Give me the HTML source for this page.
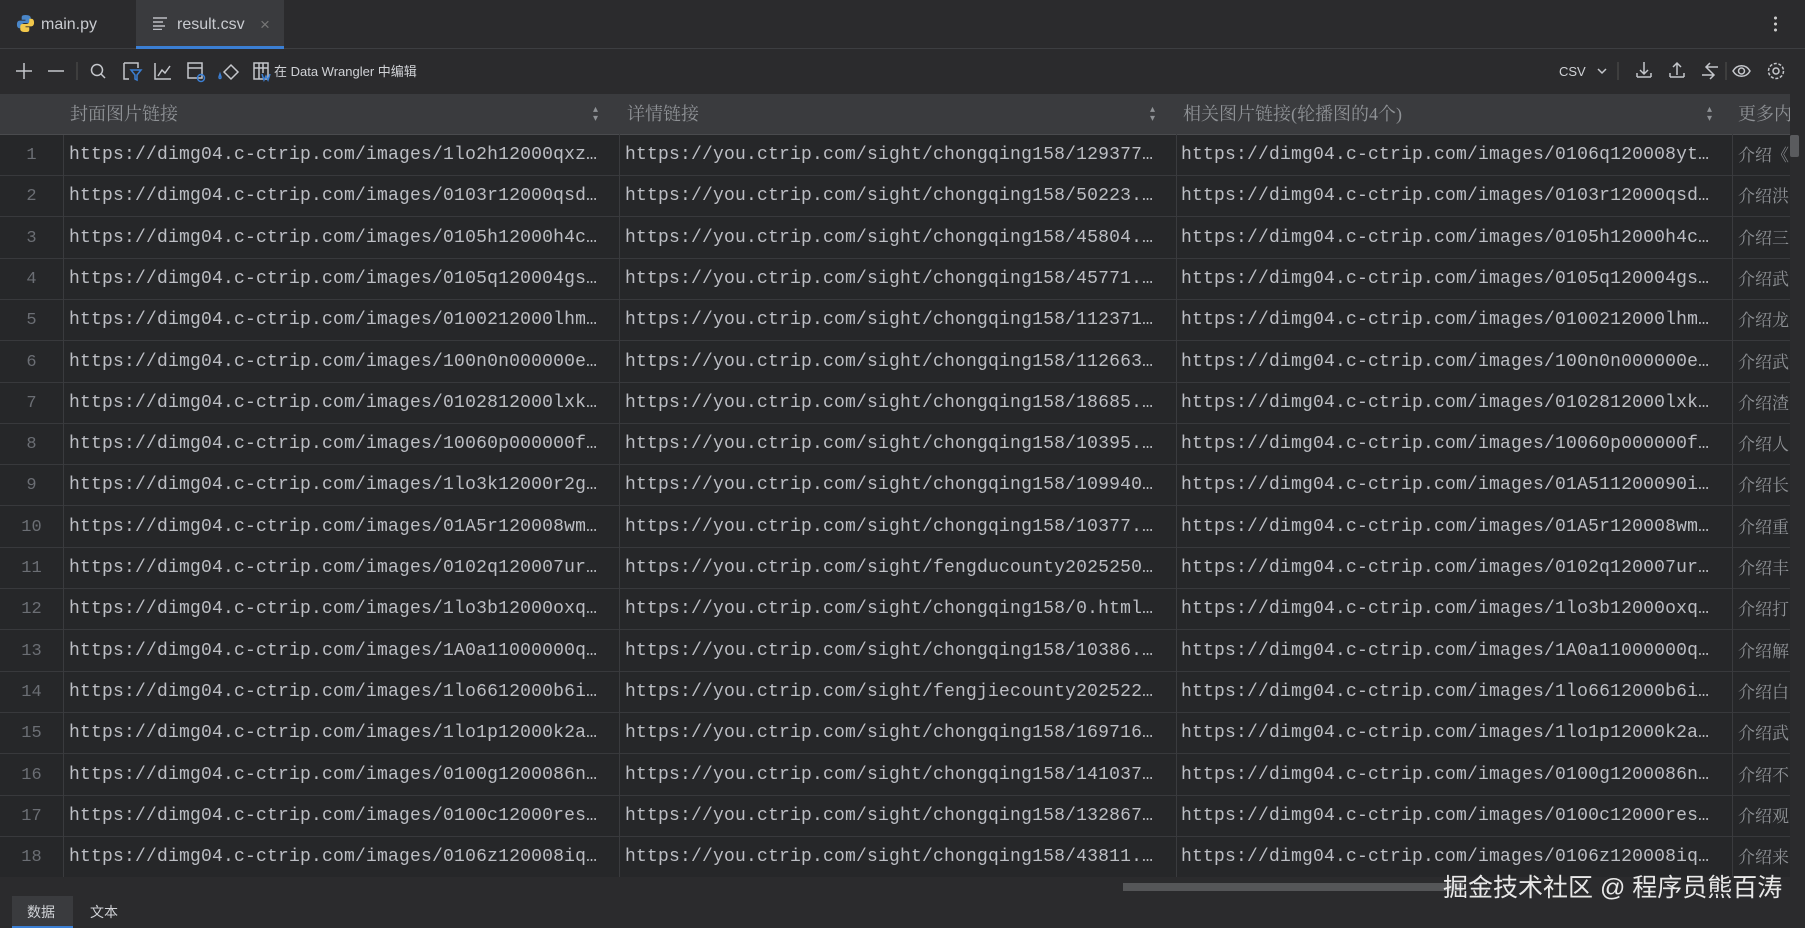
<!DOCTYPE html>
<html><head><meta charset="utf-8"><style>
*{margin:0;padding:0;box-sizing:border-box}
body{width:1805px;height:928px;background:#2b2b2d;overflow:hidden;font-family:"Liberation Sans","Noto Sans CJK SC",sans-serif;color:#bcbec4;position:relative}
.tabs{position:absolute;left:0;top:0;width:1805px;height:49px;background:#2b2b2d;border-bottom:1px solid #3d3e41}
.tab{position:absolute;top:0;height:49px;font-size:16px;line-height:49px;color:#c9cbd0}
.tb{position:absolute;left:0;top:50px;width:1805px;height:43px;background:#2b2b2d}
.grid{position:absolute;left:0;top:94px;width:1790px;height:783px;background:#262729;overflow:hidden}
.hdr{position:absolute;left:0;top:0;height:41px;width:1790px;background:#3a3b3e;border-bottom:1px solid #4a4b4e}
.h{position:absolute;top:0;height:41px;line-height:41px;font-size:18px;color:#8f9296;font-family:"Liberation Serif","Noto Serif CJK SC",serif;white-space:nowrap}
.s{position:absolute;top:11px;font-size:10px;color:#8f9296;line-height:9px}
.row{position:absolute;left:0;height:41px;width:1790px;border-bottom:1px solid #38393c}
.n{position:absolute;left:0;width:63px;text-align:center;line-height:41px;font-family:"Liberation Mono",monospace;font-size:17px;color:#6b6e74}
.c{position:absolute;top:0;line-height:41px;font-family:"Liberation Mono",monospace;font-size:18px;letter-spacing:0.2px;color:#bcbec4;white-space:nowrap;overflow:hidden}
.z{position:absolute;top:0;line-height:41px;font-size:17px;color:#8f9296;white-space:nowrap;font-family:"Liberation Serif","Noto Serif CJK SC",serif}
.vl{position:absolute;top:0;width:1px;height:784px;background:#3a3b3e}
</style></head><body>
<div class="tabs">
 <svg style="position:absolute;left:16px;top:14px" width="19" height="19" viewBox="0 0 20 20"><path d="M10 1c-4 0-4 1.5-4 3v2h4v1H4c-2 0-3 1.5-3 4s1 4 3 4h2v-2.5c0-2 1.5-3 3-3h4c1.5 0 2.5-1 2.5-2.5V4c0-1.5-1.5-3-5.5-3z" fill="#4a86c8"/><path d="M10 19c4 0 4-1.5 4-3v-2h-4v-1h6c2 0 3-1.5 3-4s-1-4-3-4h-2v2.5c0 2-1.5 3-3 3H7c-1.5 0-2.5 1-2.5 2.5V16c0 1.5 1.5 3 5.5 3z" fill="#f2c84b"/></svg>
 <div class="tab" style="left:41px">main.py</div>
 <div style="position:absolute;left:136px;top:0;width:148px;height:49px;background:#3a3b3e;border-bottom:3px solid #3b7fd4"></div>
 <svg style="position:absolute;left:153px;top:17px" width="14" height="13"><path d="M0 1h14M0 5h10M0 9h12M0 12.5h9" stroke="#bcbec4" stroke-width="1.4"/></svg>
 <div class="tab" style="left:177px">result.csv</div>
 <div class="tab" style="left:260px;color:#777;font-size:17px">×</div>
 <div style="position:absolute;left:1774px;top:15px;width:3px;height:17px;background:radial-gradient(circle,#ccc 1.4px,transparent 1.6px) 0 0/3px 6px"></div>
</div>
<div class="tb">
 <svg width="1805" height="43" style="position:absolute;left:0;top:0" fill="none" stroke="#c5c7cc" stroke-width="1.5">
  <path d="M24 13v16M16 21h16M48 21h16"/>
  <path d="M77 12v18" stroke="#444"/>
  <circle cx="97" cy="20" r="5.5"/><path d="M101 24l4 4"/>
  <path d="M124 13h14v5M124 13v16h5" /><path d="M131 20h10l-4 5v5l-2-1v-4z" stroke="#3b7fd4"/>
  <path d="M155 13v16h16M158 26l4-6 3 3 5-7"/>
  <rect x="188" y="13" width="14" height="15"/><path d="M188 18h14"/><circle cx="201" cy="28" r="3.5" stroke="#3b7fd4"/>
  <path d="M224 22l7-7 7 7-7 7z"/><path d="M219 27c0 2 2 2 2 0l-1-3z" stroke="#3b7fd4"/>
  <rect x="254" y="13" width="14" height="16"/><path d="M254 18h14M259 13v16M263 13v10"/><path d="M262 24l2 6 2-4 2 4 2-6" stroke="#3b7fd4"/>
  <path d="M1598 19l4 4 4-4"/>
  <path d="M1618 12v18" stroke="#444"/>
  <path d="M1637 27h14M1637 23v4M1651 23v4M1644 12v12M1640 20l4 4 4-4"/>
  <path d="M1670 27h14M1670 23v4M1684 23v4M1677 13v12M1673 17l4-4 4 4"/>
  <path d="M1702 25h12M1710 21l4 4-4 4M1718 17h-11M1710 13l-4 4 4 4"/>
  <path d="M1726 12v18" stroke="#444"/>
  <path d="M1733 21c4-7 13-7 17 0-4 7-13 7-17 0z"/><circle cx="1741.5" cy="21" r="3"/>
  <circle cx="1776" cy="21" r="3"/><circle cx="1776" cy="21" r="7.5" stroke-dasharray="3 1.7"/>
 </svg>
 <div style="position:absolute;left:274px;top:0;line-height:43px;font-size:13px;color:#d0d2d6">在 Data Wrangler 中编辑</div>
 <div style="position:absolute;left:1559px;top:0;line-height:43px;font-size:13px;color:#d0d2d6">CSV</div>
</div>
<div class="grid">
 <div class="hdr">
  <div class="h" style="left:70px">封面图片链接</div><div class="s" style="left:593px">▴<br>▾</div>
  <div class="h" style="left:627px">详情链接</div><div class="s" style="left:1150px">▴<br>▾</div>
  <div class="h" style="left:1183px">相关图片链接(轮播图的4个)</div><div class="s" style="left:1707px">▴<br>▾</div>
  <div class="h" style="left:1738px">更多内</div>
 </div>
 <div id="rows"></div>
 <div class="vl" style="left:63px;top:41px"></div>
 <div class="vl" style="left:619px"></div>
 <div class="vl" style="left:1176px"></div>
 <div class="vl" style="left:1732px"></div>
</div>
<div style="position:absolute;left:1790px;top:93px;width:15px;height:784px;background:#2b2b2d"></div>
<div style="position:absolute;left:1790px;top:135px;width:9px;height:22px;background:#5a5b5e;border-radius:2px"></div>
<div style="position:absolute;left:1123px;top:883px;width:340px;height:8px;background:#555658"></div>
<div style="position:absolute;left:1443px;top:868px;font-size:25px;color:#e8e8e8;font-family:'Liberation Sans','Noto Sans CJK SC',sans-serif;white-space:nowrap">掘金技术社区 @ 程序员熊百涛</div>
<div style="position:absolute;left:12px;top:896px;width:61px;height:32px;background:#3a3b3e;border-bottom:2px solid #3b7fd4"></div>
<div style="position:absolute;left:27px;top:902px;font-size:14px;color:#d0d2d6">数据</div>
<div style="position:absolute;left:90px;top:902px;font-size:14px;color:#d0d2d6">文本</div>
<script>
var a=["1lo2h12000qxz","0103r12000qsd","0105h12000h4c","0105q120004gs","0100212000lhm","100n0n000000e","0102812000lxk","10060p000000f","1lo3k12000r2g","01A5r120008wm","0102q120007ur","1lo3b12000oxq","1A0a11000000q","1lo6612000b6i","1lo1p12000k2a","0100g1200086n","0100c12000res","0106z120008iq"];
var c=["0106q120008yt","0103r12000qsd","0105h12000h4c","0105q120004gs","0100212000lhm","100n0n000000e","0102812000lxk","10060p000000f","01A511200090i","01A5r120008wm","0102q120007ur","1lo3b12000oxq","1A0a11000000q","1lo6612000b6i","1lo1p12000k2a","0100g1200086n","0100c12000res","0106z120008iq"];
var b=["chongqing158/129377…","chongqing158/50223.…","chongqing158/45804.…","chongqing158/45771.…","chongqing158/112371…","chongqing158/112663…","chongqing158/18685.…","chongqing158/10395.…","chongqing158/109940…","chongqing158/10377.…","fengducounty2025250…","chongqing158/0.html…","chongqing158/10386.…","fengjiecounty202522…","chongqing158/169716…","chongqing158/141037…","chongqing158/132867…","chongqing158/43811.…"];
var d="《洪三武龙武渣人长重丰打解白武不观来";
var h="";
for(var i=0;i<18;i++){var t=41+i*41.3;
h+='<div class="row" style="top:'+t+'px"><div class="n">'+(i+1)+'</div><div class="c" style="left:69px;width:545px">https://dimg04.c-ctrip.com/images/'+a[i]+'…</div><div class="c" style="left:625px;width:548px">https://you.ctrip.com/sight/'+b[i]+'</div><div class="c" style="left:1181px;width:548px">https://dimg04.c-ctrip.com/images/'+c[i]+'…</div><div class="z" style="left:1738px">介绍'+d[i]+'</div></div>';}
document.getElementById("rows").innerHTML=h;
</script>
</body></html>
